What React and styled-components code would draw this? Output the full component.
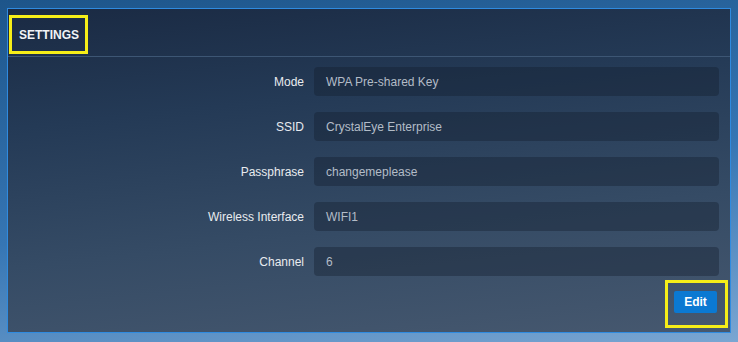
import React from "react";
import styled, { createGlobalStyle } from "styled-components";

const GlobalStyle = createGlobalStyle`
  html, body {
    margin: 0;
    padding: 0;
    font-family: "Liberation Sans", Arial, sans-serif;
  }
`;

const Page = styled.div`
  width: 738px;
  height: 342px;
  box-sizing: border-box;
  padding: 8px 7px 9px 7px;
  background: linear-gradient(172deg, #1d558a 0%, #3676b4 55%, #7aa6d2 100%);
`;

const Panel = styled.div`
  height: 100%;
  box-sizing: border-box;
  border: 1px solid #2f8be0;
  display: flex;
  flex-direction: column;
  background: linear-gradient(174deg, #1a2a43 0%, #243a56 30%, #354b65 65%, #46586f 100%);
`;

const Header = styled.div`
  height: 48px;
  display: flex;
  align-items: flex-end;
  padding: 0 0 2px 1px;
  box-sizing: border-box;
  border-bottom: 1px solid #3d5674;
`;

const Highlight = styled.div`
  border: 3px solid #f6ee18;
  box-sizing: border-box;
  display: flex;
  align-items: center;
`;

const HeaderBox = styled(Highlight)`
  width: 79px;
  height: 39px;
  padding-left: 7px;
`;

const Title = styled.span`
  color: #f1f3f6;
  font-size: 12px;
  font-weight: 700;
`;

const Form = styled.div`
  display: flex;
  flex-direction: column;
  gap: 16px;
  padding: 10px 11px 0 0;
`;

const Row = styled.div`
  display: grid;
  grid-template-columns: 296px 1fr;
  column-gap: 10px;
  align-items: center;
`;

const Label = styled.label`
  text-align: right;
  color: #e8ebef;
  font-size: 12px;
`;

const Field = styled.div`
  height: 29px;
  box-sizing: border-box;
  padding: 0 12px;
  display: flex;
  align-items: center;
  border-radius: 4px;
  background: rgba(18, 28, 44, 0.38);
  color: #b3bcc7;
  font-size: 12px;
`;

const Footer = styled.div`
  display: flex;
  justify-content: flex-end;
  padding: 4px 2px 0 0;
`;

const ButtonBox = styled(Highlight)`
  width: 63px;
  height: 48px;
  padding: 8px 7px 11px 6px;
  align-items: flex-start;
`;

const Button = styled.button`
  width: 43px;
  height: 22px;
  border: none;
  border-radius: 2px;
  background: #0b79d2;
  color: #ffffff;
  font-family: "Liberation Sans", Arial, sans-serif;
  font-size: 12px;
  font-weight: 700;
  padding: 0;
`;

const settings = [
  ["Mode", "WPA Pre-shared Key"],
  ["SSID", "CrystalEye Enterprise"],
  ["Passphrase", "changemeplease"],
  ["Wireless Interface", "WIFI1"],
  ["Channel", "6"],
];

export default function App() {
  return (
    <>
      <GlobalStyle />
      <Page>
        <Panel>
          <Header>
            <HeaderBox>
              <Title>SETTINGS</Title>
            </HeaderBox>
          </Header>
          <Form>
            {settings.map(([label, value]) => (
              <Row key={label}>
                <Label>{label}</Label>
                <Field>{value}</Field>
              </Row>
            ))}
          </Form>
          <Footer>
            <ButtonBox>
              <Button>Edit</Button>
            </ButtonBox>
          </Footer>
        </Panel>
      </Page>
    </>
  );
}
